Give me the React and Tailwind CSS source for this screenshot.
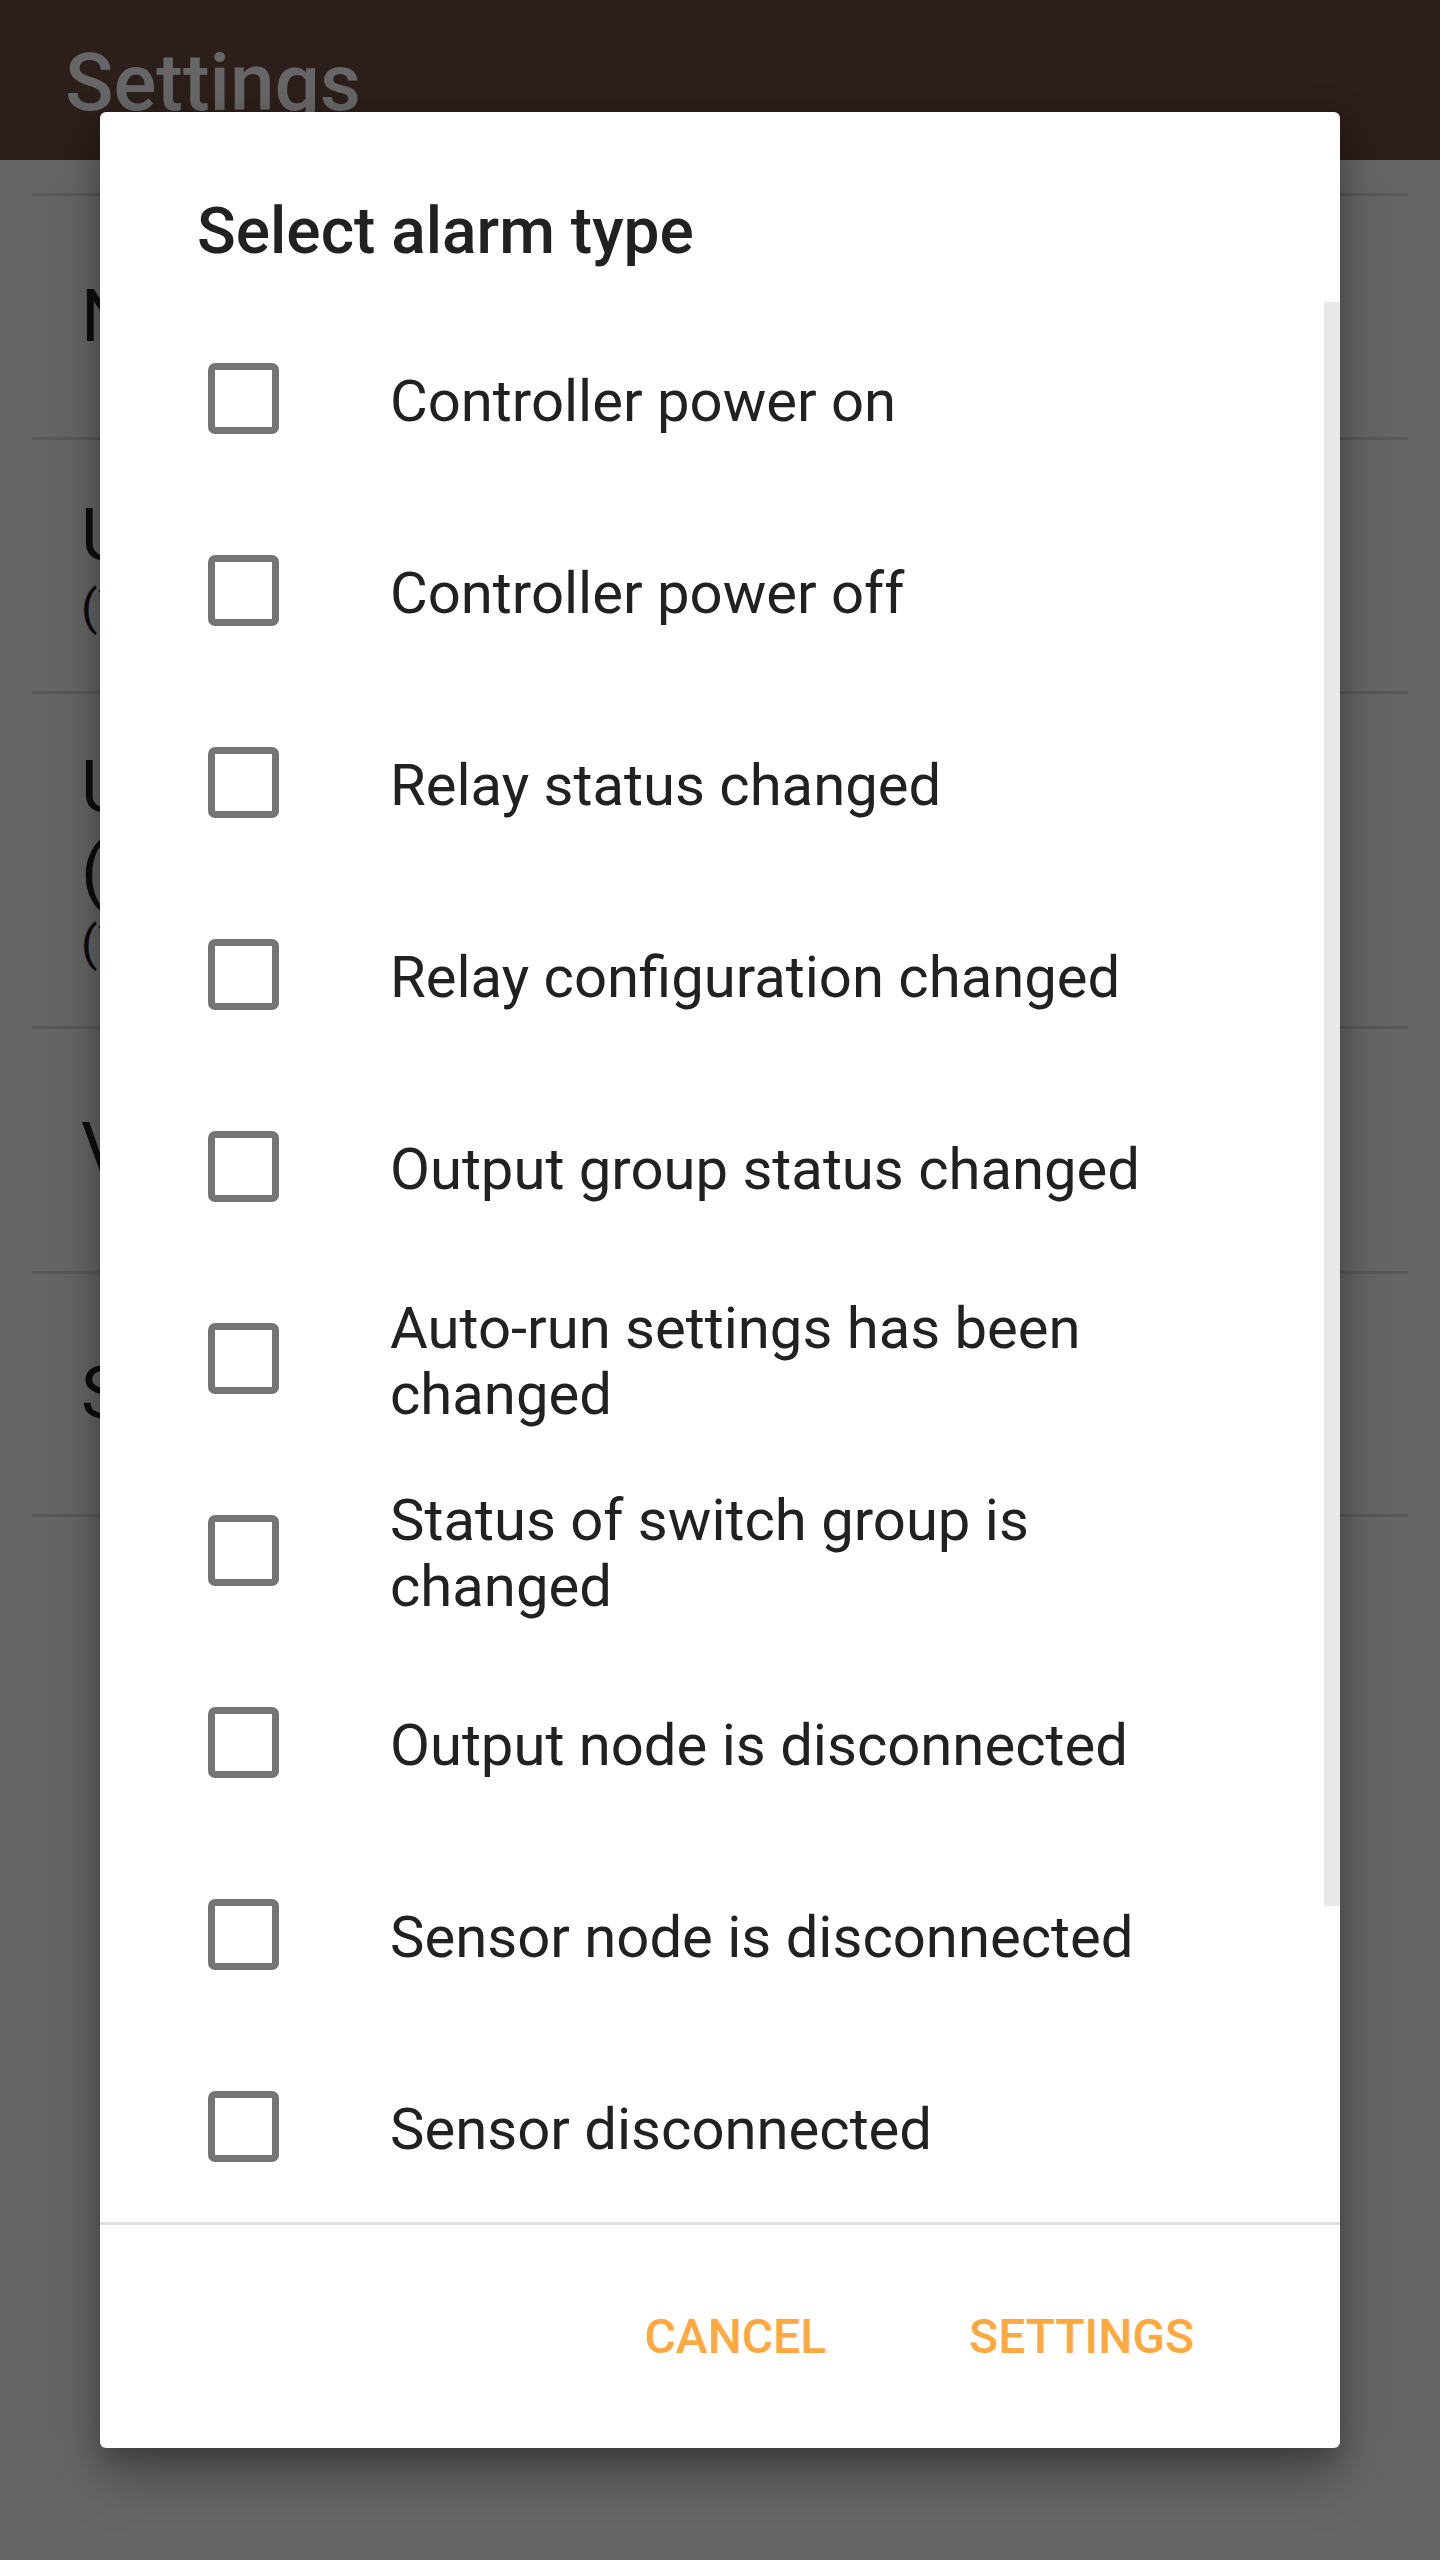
import React from "react";

const items = [
  ["Controller power on"],
  ["Controller power off"],
  ["Relay status changed"],
  ["Relay configuration changed"],
  ["Output group status changed"],
  ["Auto-run settings has been", "changed"],
  ["Status of switch group is", "changed"],
  ["Output node is disconnected"],
  ["Sensor node is disconnected"],
  ["Sensor disconnected"],
];

function Divider() {
  return <div className="mx-[32px] h-[3px] bg-[#dedede]" />;
}

function Checkbox() {
  return (
    <div className="ml-[108px] w-[71px] h-[71px] shrink-0 border-[7px] border-[#757575] rounded-[7px] bg-white" />
  );
}

function PageRow({ h, lines }) {
  return (
    <div className={`flex flex-col justify-center pl-[81px] text-[#212121] ${h}`}>
      {lines.map(([t, big], i) =>
        big ? (
          <div key={i} className="text-[72px] leading-[84px]">{t}</div>
        ) : (
          <div key={i} className="text-[48px] leading-[60px]">{t}</div>
        )
      )}
    </div>
  );
}

export default function App() {
  return (
    <div className="relative w-[1440px] h-[2560px] overflow-hidden bg-white font-[Roboto,sans-serif]">
      {/* underlying page */}
      <div className="h-[160px] bg-[#6e4b43] pl-[65px] pt-[43px]">
        <div className="text-[80px] leading-none font-medium text-white">Settings</div>
      </div>
      <div className="h-[33px]" />
      <Divider />
      <PageRow h="h-[241px]" lines={[["Name", true]]} />
      <Divider />
      <PageRow h="h-[251px]" lines={[["Unit", true], ["(V)", false]]} />
      <Divider />
      <PageRow h="h-[332px]" lines={[["Unit", true], ["(mA)", true], ["(V)", false]]} />
      <Divider />
      <PageRow h="h-[242px]" lines={[["Version", true]]} />
      <Divider />
      <PageRow h="h-[240px]" lines={[["Server", true]]} />
      <Divider />

      {/* scrim + dialog */}
      <div className="absolute inset-0 bg-black/60 flex items-center justify-center">
        <div className="w-[1240px] h-[2336px] bg-white rounded-[6px] flex flex-col shadow-[0_28px_56px_rgba(0,0,0,0.3),0_10px_24px_rgba(0,0,0,0.2)]">
          <div className="h-[190px] shrink-0 pl-[97px] pt-[88px] text-[64px] leading-none font-medium text-[#212121]">
            Select alarm type
          </div>
          <div className="relative h-[1920px] shrink-0">
            {items.map((lines, i) => (
              <div key={i} className="h-[192px] flex items-center">
                <Checkbox />
                <div className="ml-[111px] pt-[6px] text-[58px] leading-[66px] text-[#212121] whitespace-nowrap">
                  {lines.map((l, j) => (
                    <div key={j}>{l}</div>
                  ))}
                </div>
              </div>
            ))}
            <div className="absolute right-0 top-0 w-[16px] h-[1604px] bg-[#e8e8e8]" />
          </div>
          <div className="h-[3px] shrink-0 bg-[#e0e0e0]" />
          <div className="flex-1 flex items-center justify-end pr-[146px] gap-[143px] text-[48px] leading-none font-medium text-[#ffa840]">
            <span>CANCEL</span>
            <span>SETTINGS</span>
          </div>
        </div>
      </div>
    </div>
  );
}
